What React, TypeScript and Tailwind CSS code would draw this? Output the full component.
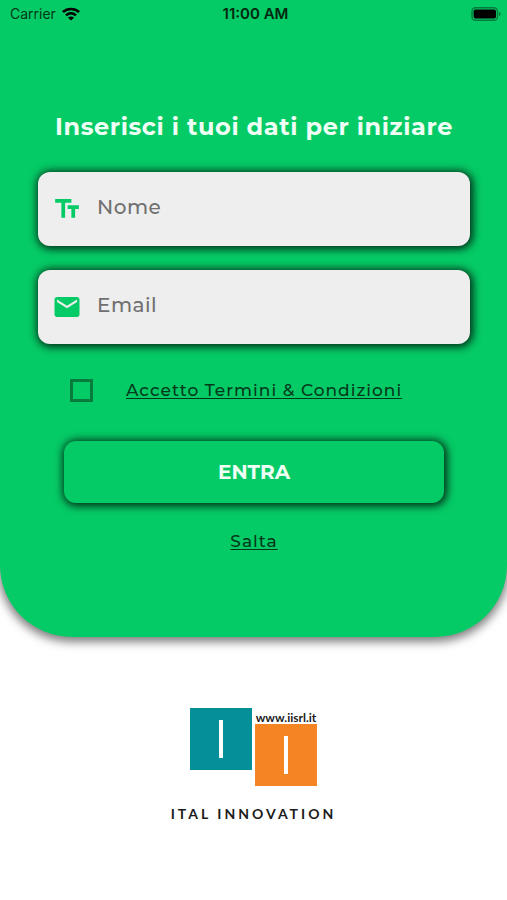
import { useState } from "react";
import type { ReactNode } from "react";
import { MdEmail, MdTextFields } from "react-icons/md";

const WifiIcon = () => (
	<svg viewBox="0 0 18 14" className="h-[14px] w-[18px]" fill="none" stroke="currentColor" strokeWidth="2.6" aria-hidden="true">
		<path d="M0.9 5C5.4.9 12.6.9 17.1 5" />
		<path d="M4 8.4C6.9 5.7 11.1 5.7 14 8.4" />
		<path d="M9 13.6 6 10.7C7.7 9.2 10.3 9.2 12 10.7Z" fill="currentColor" stroke="none" />
	</svg>
);

const BatteryIcon = () => (
	<svg viewBox="0 0 30 14" className="h-[14px] w-[30px]" aria-hidden="true">
		<rect x="1" y="0.7" width="25.5" height="12.6" rx="3.6" fill="none" stroke="#067a3c" strokeWidth="1.4" />
		<rect x="2.6" y="2.4" width="22.4" height="9.2" rx="1.8" fill="#000" />
		<path d="M28 5v4c.9-.3 1.6-1.1 1.6-2S28.9 5.3 28 5Z" fill="#067a3c" />
	</svg>
);

const StatusBar = () => (
	<div className="grid h-7 grid-cols-3 items-center pr-1.5 pl-2.5 font-['Inter',sans-serif] text-sm text-[#023817]">
		<div className="flex items-center gap-1.5">
			<span>Carrier</span>
			<span className="text-black">
				<WifiIcon />
			</span>
		</div>
		<span className="text-center text-[15px] font-semibold text-[#01270f]">11:00 AM</span>
		<div className="flex justify-end">
			<BatteryIcon />
		</div>
	</div>
);

type FieldProps = {
	id: string;
	label: string;
	type: string;
	icon: ReactNode;
};

const Field = ({ id, label, type, icon }: FieldProps) => (
	<div className="flex h-[74px] items-center gap-[15px] rounded-xl bg-[#eeeeee] px-3.5 shadow-[1px_1px_8px_2px_rgba(0,0,0,0.8)]">
		<label htmlFor={id} aria-label={label} className="text-[#05cb66]">
			{icon}
		</label>
		<input
			id={id}
			name={id}
			type={type}
			placeholder={label}
			aria-label={label}
			className="h-full min-w-0 flex-1 bg-transparent pb-1 text-xl font-medium tracking-wide text-gray-800 outline-none placeholder:text-[#707070]"
		/>
	</div>
);

const Brand = () => (
	<footer className="flex flex-col items-center pt-[71px] pb-20 font-['Lato',sans-serif] text-[#1b1b1b]">
		<div className="flex items-start gap-[3px]">
			<div className="flex size-[62px] items-center justify-center bg-[#058f98]">
				<span className="h-[38px] w-1 bg-white" />
			</div>
			<div className="flex w-[62px] flex-col">
				<a href="https://www.iisrl.it" className="h-4 text-center text-xs leading-5 font-bold">
					www.iisrl.it
				</a>
				<div className="flex size-[62px] items-center justify-center bg-[#f58522]">
					<span className="h-[38px] w-1 bg-white" />
				</div>
			</div>
		</div>
		<p className="mt-[18px] text-sm font-bold tracking-[3px]">ITAL INNOVATION</p>
	</footer>
);

export default function App() {
	const [accepted, setAccepted] = useState(false);

	return (
		<div className="min-h-screen bg-white font-['Montserrat','Inter',sans-serif]">
			<main className="rounded-b-[72px] bg-[#05cb66] pb-[82px] shadow-[0_3px_10px_2px_rgba(0,0,0,0.5)]">
				<StatusBar />
				<form className="flex flex-col pt-[83px] pr-[37px] pl-[38px]" onSubmit={(e) => e.preventDefault()}>
					<h1 className="text-center text-2xl leading-8 font-bold tracking-wide text-[#effff5]">
						Inserisci i tuoi dati per iniziare
					</h1>

					<div className="mt-[29px] flex flex-col gap-6">
						<Field id="nome" label="Nome" type="text" icon={<MdTextFields className="size-[30px]" />} />
						<Field id="email" label="Email" type="email" icon={<MdEmail className="size-[30px]" />} />
					</div>

					{/* Terms */}
					<div className="mt-[31px] flex h-[30px] items-center gap-[33px] px-8">
						<input
							id="terms"
							type="checkbox"
							checked={accepted}
							onChange={(e) => setAccepted(e.target.checked)}
							className="size-[23px] shrink-0 appearance-none border-3 border-[#077c3c] checked:bg-[#077c3c]"
						/>
						<label
							htmlFor="terms"
							className="text-[17px] leading-7 font-medium tracking-[1px] whitespace-nowrap text-[#02391a] underline underline-offset-2"
						>
							Accetto Termini &amp; Condizioni
						</label>
					</div>

					<button
						type="submit"
						className="mx-[26px] mt-9 h-[62px] rounded-xl bg-[#05cb66] text-xl font-bold text-[#effff5] shadow-[1px_1px_8px_2px_rgba(0,0,0,0.8)]"
					>
						ENTRA
					</button>

					<a
						href="#salta"
						className="mt-6 self-center text-[17px] leading-7 font-medium tracking-[1px] text-[#02391a] underline underline-offset-2"
					>
						Salta
					</a>
				</form>
			</main>
			<Brand />
		</div>
	);
}
